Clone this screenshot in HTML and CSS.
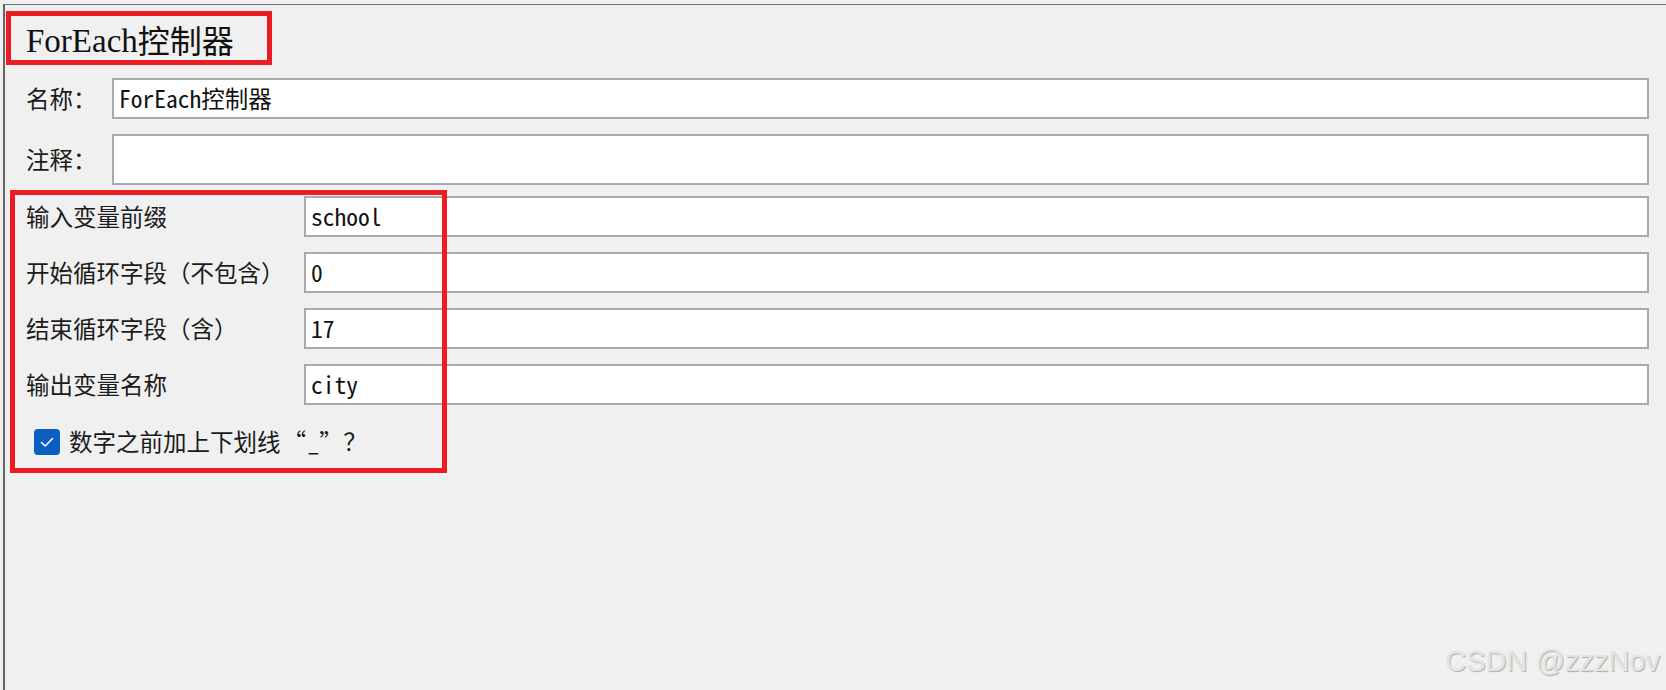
FILE: index.html
```html
<!DOCTYPE html>
<html lang="zh-CN">
<head>
<meta charset="utf-8">
<title>ForEach控制器</title>
<link rel="stylesheet" href="styles.css">
</head>
<body>
<div class="frame">
  <h1 class="title"><span class="title-lat">ForEach</span>控制器</h1>
  <div class="form">
    <div class="row">
      <span class="lbl lbl-main">名称：</span>
      <div class="field"><span class="mono">ForEach</span>控制器</div>
    </div>
    <div class="row row-tall">
      <span class="lbl lbl-main">注释：</span>
      <div class="field"></div>
    </div>
    <div class="group">
      <div class="row">
        <span class="lbl lbl-group">输入变量前缀</span>
        <div class="field"><span class="mono">school</span></div>
      </div>
      <div class="row">
        <span class="lbl lbl-group">开始循环字段（不包含）</span>
        <div class="field"><span class="mono">0</span></div>
      </div>
      <div class="row">
        <span class="lbl lbl-group">结束循环字段（含）</span>
        <div class="field"><span class="mono">17</span></div>
      </div>
      <div class="row">
        <span class="lbl lbl-group">输出变量名称</span>
        <div class="field"><span class="mono">city</span></div>
      </div>
      <div class="check-row">
        <span class="checkbox">
          <svg width="26" height="26" viewBox="0 0 26 26"><polyline points="7.5,13.5 11.2,17 18.5,9.5" fill="none" stroke="#ffffff" stroke-width="1.6" stroke-linecap="round" stroke-linejoin="round"/></svg>
        </span>
        <span class="check-label">数字之前加上下划线<span class="q q-open">“</span><span class="mono">_</span><span class="q q-close">”</span>？</span>
      </div>
    </div>
  </div>
  <div class="mark mark-title"></div>
  <div class="mark mark-group"></div>
  <div class="watermark">CSDN @zzzNov</div>
</div>
</body>
</html>
```

FILE: styles.css
```css
html, body {
  margin: 0;
  padding: 0;
  background: #f0f0f0;
}

body {
  font-family: "Noto Sans CJK SC", sans-serif;
  color: #1b1b1b;
  overflow: hidden;
}

.frame {
  position: relative;
  box-sizing: border-box;
  margin: 4px 0 0 3px;
  height: 686px;
  border-left: 2px solid #646464;
  border-top: 1px solid #707070;
}

.title {
  margin: 0;
  height: 73px;
  display: flex;
  align-items: center;
  padding-left: 21px;
  font-family: "Liberation Serif", "Noto Sans CJK SC", serif;
  font-weight: 400;
  font-size: 32px;
  line-height: 1;
  color: #111;
}

.title-lat {
  font-family: "Liberation Serif", serif;
  font-size: 33px;
}

.form {
  display: flex;
  flex-direction: column;
  gap: 15px;
  padding-left: 21px;
  padding-right: 17px;
}

.group {
  display: flex;
  flex-direction: column;
  gap: 15px;
  margin-top: -4px;
}

.row {
  display: flex;
  align-items: center;
  height: 41px;
}

.row-tall {
  height: 51px;
}

.lbl {
  flex: none;
  font-size: 23.5px;
  line-height: 1;
  white-space: nowrap;
}

.lbl-main {
  width: 86px;
}

.lbl-group {
  width: 278px;
}

.field {
  flex: 1;
  box-sizing: border-box;
  height: 100%;
  display: flex;
  align-items: center;
  padding-left: 5px;
  background: #ffffff;
  border: 2px solid #aaaaae;
  font-size: 23.5px;
  line-height: 1;
  color: #111;
  white-space: nowrap;
}

.mono {
  font-family: "Noto Sans Mono CJK SC", "Liberation Mono", monospace;
  font-size: 23.5px;
}

.check-row {
  display: flex;
  align-items: center;
  height: 41px;
  margin-top: 1px;
  padding-left: 8px;
}

.checkbox {
  flex: none;
  width: 26px;
  height: 26px;
  border-radius: 4px;
  background: #0b5fc1;
  display: flex;
}

.check-label {
  display: flex;
  align-items: baseline;
  margin-left: 9px;
  font-size: 23.5px;
  line-height: 1;
  white-space: nowrap;
}

.q {
  display: inline-block;
  text-align: left;
}

.q-open {
  width: 27px;
  padding-left: 2px;
  box-sizing: border-box;
}

.q-close {
  width: 24px;
}

.mark {
  position: absolute;
  box-sizing: border-box;
  border: 5px solid #ec1c24;
  pointer-events: none;
}

.mark-title {
  left: 1px;
  top: 6px;
  width: 266px;
  height: 54px;
}

.mark-group {
  left: 5px;
  top: 185px;
  width: 437px;
  height: 283px;
}

.watermark {
  position: absolute;
  right: 6px;
  bottom: 14px;
  font-family: "Liberation Sans", Arial, sans-serif;
  font-size: 29px;
  line-height: 1;
  color: #e4e4e4;
  text-shadow: 1px 1px 1px rgba(0, 0, 0, 0.28);
}
```
